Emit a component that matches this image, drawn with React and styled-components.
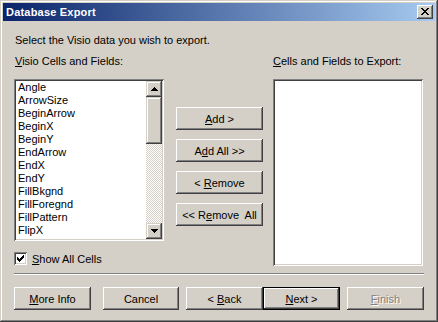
import React from "react";
import styled, { createGlobalStyle } from "styled-components";

const Global = createGlobalStyle`
  html, body { margin: 0; padding: 0; background: #D4D0C8; }
  body { font-family: "Liberation Sans", Arial, sans-serif; font-size: 11px; }
`;

const Window = styled.div`
  width: 438px;
  height: 322px;
  box-sizing: border-box;
  background: #d4d0c8;
  padding: 3px;
  display: flex;
  flex-direction: column;
  box-shadow: inset -1px -1px #404040, inset 1px 1px #d4d0c8,
    inset -2px -2px #808080, inset 2px 2px #ffffff;
  font-family: "Liberation Sans", Arial, sans-serif;
  font-size: 11px;
  color: #000;
`;

const TitleBar = styled.div`
  height: 18px;
  flex: none;
  display: flex;
  align-items: center;
  justify-content: space-between;
  background: linear-gradient(to right, #0a246a, #a6caf0);
  padding: 0 2px;
`;

const Title = styled.span`
  color: #fff;
  font-weight: bold;
  font-size: 11px;
  padding-left: 1px;
  letter-spacing: 0.2px;
`;

const CloseButton = styled.div`
  width: 16px;
  height: 14px;
  box-sizing: border-box;
  background: #d4d0c8;
  display: flex;
  align-items: center;
  justify-content: center;
  box-shadow: inset -1px -1px #404040, inset 1px 1px #ffffff,
    inset -2px -2px #808080, inset 2px 2px #d4d0c8;
  padding-bottom: 1px;
`;

const Body = styled.div`
  flex: 1;
  display: flex;
  flex-direction: column;
  padding: 13px 12px 0 11px;
`;

const Text = styled.div`
  height: 13px;
  line-height: 13px;
  white-space: nowrap;
  padding-left: ${(p) => p.$indent || 0}px;
`;

const U = styled.span`
  text-decoration: underline;
  text-underline-offset: 1px;
`;

const Main = styled.div`
  display: flex;
  margin-top: 8px;
`;

const Column = styled.div`
  width: ${(p) => p.$width}px;
  flex: none;
  display: flex;
  flex-direction: column;
`;

const MiddleColumn = styled.div`
  width: 87px;
  flex: none;
  display: flex;
  flex-direction: column;
  gap: 9px;
  padding-top: 52px;
  margin: 0 10px 0 12px;
`;

const ListBox = styled.div`
  margin-top: 11px;
  height: ${(p) => p.$height}px;
  box-sizing: border-box;
  background: #fff;
  padding: 2px;
  display: flex;
  box-shadow: inset 1px 1px #808080, inset -1px -1px #ffffff,
    inset 2px 2px #404040, inset -2px -2px #d4d0c8;
`;

const Items = styled.div`
  flex: 1;
  overflow: hidden;
  padding-left: 2px;
`;

const Item = styled.div`
  height: 13px;
  line-height: 13px;
  white-space: nowrap;
`;

const ScrollBar = styled.div`
  width: 16px;
  flex: none;
  display: flex;
  flex-direction: column;
`;

const Raised = styled.div`
  box-sizing: border-box;
  background: #d4d0c8;
  box-shadow: inset -1px -1px #404040, inset 1px 1px #d4d0c8,
    inset -2px -2px #808080, inset 2px 2px #ffffff;
`;

const ArrowButton = styled(Raised)`
  height: 16px;
  flex: none;
  display: flex;
  align-items: center;
  justify-content: center;
`;

const Track = styled.div`
  flex: 1;
  background-color: #fff;
  background-image: repeating-conic-gradient(#d4d0c8 0 25%, #ffffff 0 50%);
  background-size: 2px 2px;
`;

const Thumb = styled(Raised)`
  height: 47px;
`;

const CheckRow = styled.div`
  display: flex;
  align-items: center;
  margin-top: 11px;
  height: 13px;
  gap: 5px;
`;

const CheckBox = styled.div`
  width: 13px;
  height: 13px;
  box-sizing: border-box;
  background: #fff;
  display: flex;
  align-items: center;
  justify-content: center;
  box-shadow: inset 1px 1px #808080, inset -1px -1px #ffffff,
    inset 2px 2px #404040, inset -2px -2px #d4d0c8;
`;

const Button = styled.div`
  width: ${(p) => p.$width || 77}px;
  height: 23px;
  flex: none;
  margin-left: ${(p) => p.$ml || 0}px;
  box-sizing: border-box;
  background: #d4d0c8;
  display: flex;
  align-items: center;
  justify-content: center;
  white-space: nowrap;
  color: ${(p) => (p.$disabled ? "#808080" : "#000")};
  text-shadow: ${(p) => (p.$disabled ? "1px 1px 0 #ffffff" : "none")};
  box-shadow: ${(p) =>
    p.$default
      ? "inset 0 0 0 1px #000, inset -2px -2px #404040, inset 2px 2px #ffffff, inset -3px -3px #808080"
      : "inset -1px -1px #404040, inset 1px 1px #ffffff, inset -2px -2px #808080, inset 2px 2px #d4d0c8"};
`;

const ButtonLabel = styled.span`
  white-space: pre;
`;

const Separator = styled.div`
  margin-top: 7px;
  height: 0;
  border-top: 1px solid #808080;
  border-bottom: 1px solid #ffffff;
  margin-right: -1px;
`;

const Footer = styled.div`
  display: flex;
  margin-top: 12px;
`;

const items = [
  "Angle",
  "ArrowSize",
  "BeginArrow",
  "BeginX",
  "BeginY",
  "EndArrow",
  "EndX",
  "EndY",
  "FillBkgnd",
  "FillForegnd",
  "FillPattern",
  "FlipX",
  "FlipY",
];

const Arrow = ({ down }) => (
  <svg width="7" height="4" viewBox="0 0 7 4">
    {down ? (
      <path d="M0 0h7v1H6v1H5v1H4v1H3V3H2V2H1V1H0z" fill="#000" />
    ) : (
      <path d="M3 0h1v1h1v1h1v1h1v1H0V3h1V2h1V1h1z" fill="#000" />
    )}
  </svg>
);

const CheckMark = () => (
  <svg width="7" height="7" viewBox="0 0 7 7">
    <path
      d="M6 0h1v3H6v1H5v1H4v1H3v1H2V6H1V5H0V2h1v1h1v1h1V3h1V2h1V1h1z"
      fill="#000"
    />
  </svg>
);

const CloseIcon = () => (
  <svg width="8" height="7" viewBox="0 0 8 7">
    <path
      d="M0 0h2v1h1v1h2V1h1V0h2v1H7v1H6v1H5v1h1v1h1v1h1v1H6V6H5V5H3v1H2v1H0V6h1V5h1V4h1V3H2V2H1V1H0z"
      fill="#000"
    />
  </svg>
);

export default function App() {
  return (
    <>
      <Global />
      <Window>
        <TitleBar>
          <Title>Database Export</Title>
          <CloseButton>
            <CloseIcon />
          </CloseButton>
        </TitleBar>
        <Body>
          <Text $indent={1}>Select the Visio data you wish to export.</Text>
          <Main>
            <Column $width={150}>
              <Text $indent={1}>
                <U>V</U>isio Cells and Fields:
              </Text>
              <ListBox $height={162}>
                <Items>
                  {items.map((it) => (
                    <Item key={it}>{it}</Item>
                  ))}
                </Items>
                <ScrollBar>
                  <ArrowButton>
                    <Arrow />
                  </ArrowButton>
                  <Track>
                    <Thumb />
                  </Track>
                  <ArrowButton>
                    <Arrow down />
                  </ArrowButton>
                </ScrollBar>
              </ListBox>
              <CheckRow>
                <CheckBox>
                  <CheckMark />
                </CheckBox>
                <span>
                  <U>S</U>how All Cells
                </span>
              </CheckRow>
            </Column>
            <MiddleColumn>
              <Button $width={87}>
                <ButtonLabel>
                  <U>A</U>dd &gt;
                </ButtonLabel>
              </Button>
              <Button $width={87}>
                <ButtonLabel>
                  A<U>d</U>d All &gt;&gt;
                </ButtonLabel>
              </Button>
              <Button $width={87}>
                <ButtonLabel>
                  {"< "}
                  <U>R</U>emove
                </ButtonLabel>
              </Button>
              <Button $width={87}>
                <ButtonLabel>
                  {"<< R"}
                  <U>e</U>
                  {"move  All"}
                </ButtonLabel>
              </Button>
            </MiddleColumn>
            <Column $width={150}>
              <Text>
                <U>C</U>ells and Fields to Export:
              </Text>
              <ListBox $height={187} />
            </Column>
          </Main>
          <Separator />
          <Footer>
            <Button>
              <ButtonLabel>
                <U>M</U>ore Info
              </ButtonLabel>
            </Button>
            <Button $ml={12} $width={76}>
              <ButtonLabel>Cancel</ButtonLabel>
            </Button>
            <Button $ml={7}>
              <ButtonLabel>
                {"< "}
                <U>B</U>ack
              </ButtonLabel>
            </Button>
            <Button $default>
              <ButtonLabel>
                <U>N</U>ext &gt;
              </ButtonLabel>
            </Button>
            <Button $ml={7} $disabled>
              <ButtonLabel>
                <U>F</U>inish
              </ButtonLabel>
            </Button>
          </Footer>
        </Body>
      </Window>
    </>
  );
}
